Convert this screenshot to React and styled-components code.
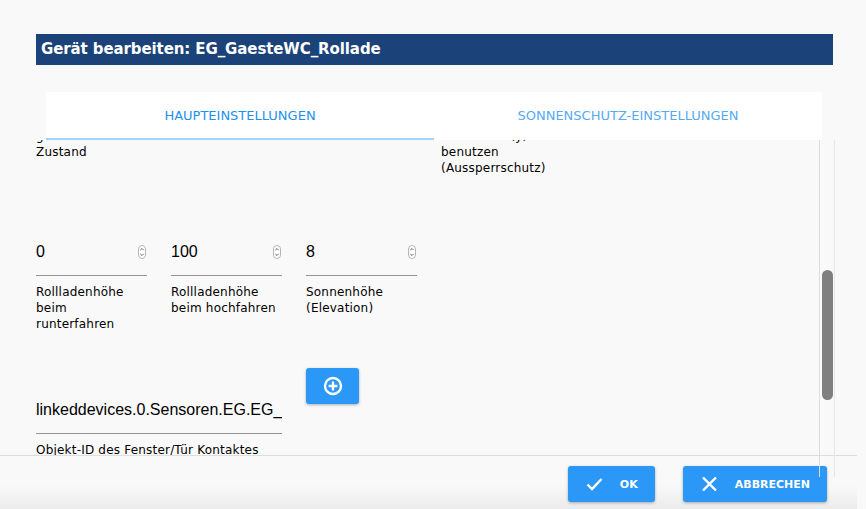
import React from "react";
import styled, { createGlobalStyle } from "styled-components";

const GlobalStyle = createGlobalStyle`
  html, body {
    margin: 0;
    padding: 0;
    background: #f9f9f9;
  }
  body {
    width: 866px;
    height: 509px;
    overflow: hidden;
    font-family: "DejaVu Sans", "Liberation Sans", sans-serif;
  }
`;

const Dialog = styled.div`
  position: relative;
  width: 866px;
  height: 509px;
  display: flex;
  flex-direction: column;
`;

const TitleBar = styled.div`
  margin: 34px 33px 0 36px;
  height: 31px;
  padding-left: 5px;
  background: #1b4379;
  color: #fff;
  font-weight: bold;
  font-size: 15px;
  line-height: 31px;
  letter-spacing: -0.1px;
`;

const Body = styled.div`
  flex: 1;
  margin-top: 27px;
  display: flex;
  flex-direction: column;
  overflow: hidden;
`;

const TabBar = styled.div`
  flex: none;
  margin: 0 44px 0 46px;
  height: 48px;
  background: #fff;
  display: flex;
`;

const Tab = styled.div`
  flex: 1;
  display: flex;
  align-items: center;
  justify-content: center;
  font-size: 13px;
  color: ${(p) => (p.$active ? "#1e90f0" : "#55aaf3")};
  border-bottom: 2px solid ${(p) => (p.$active ? "#a4d2fa" : "transparent")};
  box-sizing: border-box;
`;

const Content = styled.div`
  flex: 1;
  overflow: hidden;
`;

const Grid = styled.div`
  margin-top: -12px;
  padding-left: 36px;
  display: grid;
  grid-template-columns: repeat(4, 111px);
  column-gap: 24px;
  align-items: start;
`;

const Label = styled.div`
  grid-column: ${(p) => p.$col || "auto"};
  font-size: 12px;
  line-height: 16px;
  letter-spacing: 0.2px;
  color: #000;
  white-space: ${(p) => (p.$nowrap ? "nowrap" : "normal")};
`;

const Spacer = styled.div`
  grid-column: 1 / -1;
  height: ${(p) => p.$h}px;
`;

const Field = styled.div`
  grid-column: ${(p) => p.$col || "auto"};
  margin-top: ${(p) => p.$top || 0}px;
  min-width: 0;
`;

const InputLine = styled.div`
  height: 39px;
  border-bottom: 1px solid #949494;
  display: flex;
  align-items: flex-start;
  font-family: "Liberation Sans", Arial, sans-serif;
  font-size: 16px;
  line-height: 32px;
  color: #000;
`;

const Value = styled.span`
  flex: 1;
  min-width: 0;
  overflow: hidden;
  white-space: nowrap;
`;

const SpinBox = styled.span`
  display: flex;
  align-items: center;
  height: 32px;
  margin-right: 1px;
`;

const FieldLabel = styled(Label)`
  margin-top: 8px;
`;

const IconButton = styled.button`
  grid-column: 3;
  width: 53px;
  height: 36px;
  border: none;
  border-radius: 3px;
  background: #2b97f7;
  box-shadow: 0 1px 3px rgba(0, 0, 0, 0.3);
  display: flex;
  align-items: center;
  justify-content: center;
  padding: 0;
`;

const Footer = styled.div`
  flex: none;
  width: 857px;
  height: 54px;
  border-top: 1px solid #dedede;
  background: linear-gradient(#f9f9f9 55%, #ebebeb);
  display: flex;
  justify-content: flex-end;
  align-items: flex-start;
  gap: 28px;
  padding: 10px 30px 0 0;
  box-sizing: border-box;
`;

const ActionButton = styled.button`
  height: 36px;
  border: none;
  border-radius: 3px;
  background: #2b97f7;
  box-shadow: 0 1px 3px rgba(0, 0, 0, 0.3);
  color: #fff;
  font-family: "DejaVu Sans", sans-serif;
  font-weight: bold;
  font-size: 11px;
  display: flex;
  align-items: center;
  gap: 17px;
  padding: 0 17px 0 18px;
`;

const Scrollbar = styled.div`
  position: absolute;
  left: 819px;
  top: 140px;
  width: 14px;
  height: 337px;
  border-left: 1px solid #dcdcdc;
  border-right: 1px solid #e6e6e6;
`;

const Thumb = styled.div`
  position: absolute;
  left: 2px;
  top: 130px;
  width: 11px;
  height: 130px;
  border-radius: 6px;
  background: #7f7f7f;
`;

const Spinner = () => (
  <svg width="8" height="14" viewBox="0 0 8 14">
    <rect x="0.5" y="0.5" width="7" height="13" rx="3.5" fill="#fff" stroke="#b5b5b5" />
    <path d="M2.3 5.2 L4 3.5 L5.7 5.2" fill="none" stroke="#555" strokeWidth="0.9" />
    <path d="M2.3 8.8 L4 10.5 L5.7 8.8" fill="none" stroke="#555" strokeWidth="0.9" />
  </svg>
);

const NumberField = ({ col, value, label }) => (
  <Field $col={col}>
    <InputLine>
      <Value>{value}</Value>
      <SpinBox>
        <Spinner />
      </SpinBox>
    </InputLine>
    <FieldLabel>{label}</FieldLabel>
  </Field>
);

const PlusCircle = () => (
  <svg width="20" height="20" viewBox="0 0 20 20">
    <circle cx="10" cy="10" r="8" fill="none" stroke="#fff" strokeWidth="2.4" />
    <path d="M10 5.6 V14.4 M5.6 10 H14.4" stroke="#fff" strokeWidth="2.4" />
  </svg>
);

const CheckIcon = () => (
  <svg width="17" height="14" viewBox="0 0 17 14">
    <path d="M1.5 7.5 L6 12 L15.5 2" fill="none" stroke="#fff" strokeWidth="2.4" />
  </svg>
);

const CloseIcon = () => (
  <svg width="17" height="14" viewBox="0 0 17 14">
    <path d="M2 0.5 L15 13.5 M15 0.5 L2 13.5" fill="none" stroke="#fff" strokeWidth="2.4" />
  </svg>
);

export default function App() {
  return (
    <>
      <GlobalStyle />
      <Dialog>
        <TitleBar>Gerät bearbeiten: EG_GaesteWC_Rollade</TitleBar>
        <Body>
          <TabBar>
            <Tab $active>HAUPTEINSTELLUNGEN</Tab>
            <Tab>SONNENSCHUTZ-EINSTELLUNGEN</Tab>
          </TabBar>
          <Content>
            <Grid>
              <Label $col="1 / 4" $nowrap>
                gilt als offen im
                <br />
                Zustand
              </Label>
              <Label $col="4">
                Türkontakt (y)
                <br />
                benutzen
                <br />
                (Aussperrschutz)
              </Label>
              <Spacer $h={60} />
              <NumberField col="1" value="0" label="Rollladenhöhe beim runterfahren" />
              <NumberField col="2" value="100" label="Rollladenhöhe beim hochfahren" />
              <NumberField col="3" value="8" label="Sonnenhöhe (Elevation)" />
              <Spacer $h={36} />
              <Field $col="1 / 3" $top={26}>
                <InputLine>
                  <Value>linkeddevices.0.Sensoren.EG.EG_GaesteWC_Fenster</Value>
                </InputLine>
                <FieldLabel $nowrap>Objekt-ID des Fenster/Tür Kontaktes</FieldLabel>
              </Field>
              <IconButton>
                <PlusCircle />
              </IconButton>
            </Grid>
          </Content>
        </Body>
        <Footer>
          <ActionButton>
            <CheckIcon />
            OK
          </ActionButton>
          <ActionButton>
            <CloseIcon />
            ABBRECHEN
          </ActionButton>
        </Footer>
        <Scrollbar>
          <Thumb />
        </Scrollbar>
      </Dialog>
    </>
  );
}
